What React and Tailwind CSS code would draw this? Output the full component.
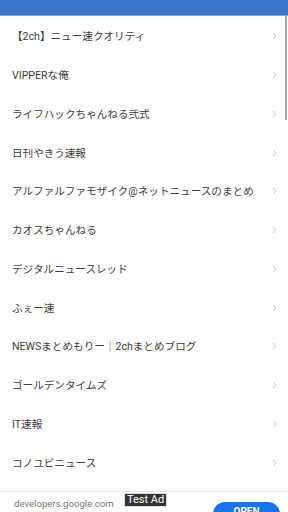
import React from "react";

const items = [
  "【2ch】ニュー速クオリティ",
  "VIPPERな俺",
  "ライフハックちゃんねる弐式",
  "日刊やきう速報",
  "アルファルファモザイク@ネットニュースのまとめ",
  "カオスちゃんねる",
  "デジタルニュースレッド",
  "ふぇー速",
  "NEWSまとめもりー｜2chまとめブログ",
  "ゴールデンタイムズ",
  "IT速報",
  "コノユビニュース",
];

export default function App() {
  return (
    <div
      className="relative w-[288px] h-[512px] overflow-hidden bg-white flex flex-col"
      style={{ fontFamily: 'Roboto, "Noto Sans CJK JP", sans-serif' }}
    >
      <div className="h-[16px] shrink-0 bg-[#3a79cc] border-b border-[#7fa9e0]"></div>
      <div className="flex flex-col flex-1 pt-[1px]">
        {items.map((t) => (
          <div key={t} className="h-[38.75px] flex items-center pl-[12px] pr-[10px]">
            <span className="flex-1 pt-[2px] text-[10.6px] text-[#3d3d3d] whitespace-nowrap">{t}</span>
            <svg width="5" height="8" viewBox="0 0 5 8" className="mr-[1px]">
              <path d="M1 1 L4 4 L1 7" fill="none" stroke="#c4c4c4" strokeWidth="0.9" />
            </svg>
          </div>
        ))}
      </div>
      <div className="absolute right-[1px] top-[16px] w-[2px] h-[104px] bg-[#a8a8a8]"></div>
      <div className="relative h-[21px] shrink-0 bg-white border-t border-[#e6e6e6] flex items-start justify-between pl-[14px] pr-[8px]">
        <div className="pt-[6px] text-[9.6px] leading-[12px] text-[#777777]">
          developers.google.com
        </div>
        <div className="mt-[10px] w-[67px] h-[24px] rounded-full bg-[#1a73e8] text-white text-[10px] font-bold flex justify-center pt-[2px]">
          OPEN
        </div>
        <div className="absolute left-[124px] top-[1px] h-[14px] px-[2px] bg-[#333333] border border-[#dddddd] text-white text-[11px] leading-[12px] flex items-center">
          Test Ad
        </div>
      </div>
    </div>
  );
}
